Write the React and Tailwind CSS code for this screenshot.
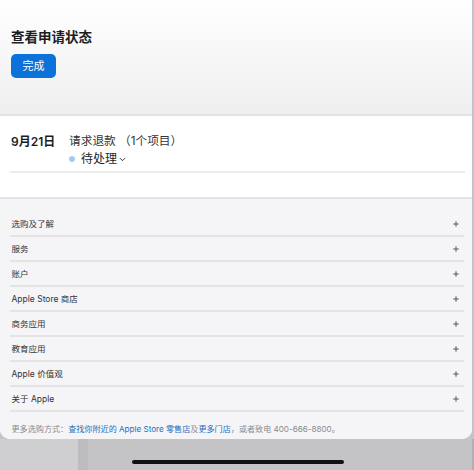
import React from "react";

const rows = [
  "选购及了解",
  "服务",
  "账户",
  "Apple Store 商店",
  "商务应用",
  "教育应用",
  "Apple 价值观",
  "关于 Apple",
];

function Plus() {
  return (
    <svg width="6" height="6" viewBox="0 0 6 6" className="block">
      <path d="M3 0.3V5.7M0.3 3H5.7" stroke="#555" strokeWidth="1" />
    </svg>
  );
}

export default function App() {
  return (
    <div className="relative w-[474px] h-[470px] overflow-hidden bg-[#c4c4c6] font-['Inter','Noto_Sans_CJK_SC',sans-serif]">
      <div className="w-[472px] h-[439px] rounded-b-[10px] overflow-hidden bg-white flex flex-col">
        <div className="h-[114px] bg-gradient-to-b from-white to-[#efeff0] pt-[28px] pl-[11px] flex flex-col items-start">
          <h1 className="text-[13.5px] leading-[19px] font-semibold text-[#1d1d1f]">查看申请状态</h1>
          <button className="mt-[7px] w-[45px] h-[24px] rounded-[5px] bg-[#0a72d8] text-white text-[11px] leading-[24px]">
            完成
          </button>
        </div>
        <div className="h-[2px] bg-[#e4e4e6]" />
        <div className="h-[81px] bg-white pt-[17px] px-[10px]">
          <div className="flex pl-[1px]">
            <div className="w-[58px] text-[12px] leading-[17px] font-semibold text-[#1d1d1f]">9月21日</div>
            <div className="flex flex-col">
              <div className="text-[11.7px] leading-[17px] text-[#333336]">请求退款 （1个项目）</div>
              <div className="flex items-center h-[17px]">
                <span className="w-[6px] h-[6px] rounded-full bg-[#a8cbe9]" />
                <span className="ml-[6px] text-[12px] leading-[17px] text-[#1d1d1f]">待处理</span>
                <svg width="7" height="5" viewBox="0 0 7 5" className="ml-[2px] mt-[1px]">
                  <path d="M1 1.2L3.5 3.7L6 1.2" stroke="#333" strokeWidth="1" fill="none" />
                </svg>
              </div>
            </div>
          </div>
          <div className="mt-[4px] h-[2px] bg-[#ececee] mr-[-3px]" />
        </div>
        <div className="h-[2px] bg-[#e3e3e5]" />
        <div className="flex-1 bg-[#f5f5f7] pt-[13px] pl-[10px] pr-[8px]">
          {rows.map((r) => (
            <div
              key={r}
              className="h-[25px] border-b-2 border-[#e4e4e6] flex items-center justify-between pl-[1.5px] pr-[5px] pt-[1px]"
            >
              <span className="text-[8.5px] leading-[12px] text-[#333336]">{r}</span>
              <Plus />
            </div>
          ))}
          <div className="mt-[11px] pl-[1.5px] text-[8.1px] leading-[12px] text-[#8a8a8f] whitespace-nowrap">
            更多选购方式：<span className="text-[#1f6fc0]">查找你附近的 Apple Store 零售店</span>及
            <span className="text-[#1f6fc0]">更多门店</span>，或者致电 400-666-8800。
          </div>
        </div>
      </div>
      <div className="flex h-[31px]">
        <div className="w-[78px] bg-[#cfcfd1]" />
        <div className="w-[10px] bg-[#bdbdbf]" />
        <div className="flex-1 bg-[#c4c4c6]" />
        <div className="w-[2px] bg-[#b0b0b2]" />
      </div>
      <div className="absolute left-[132px] top-[460px] w-[212px] h-[4px] rounded-full bg-[#111]" />
    </div>
  );
}
